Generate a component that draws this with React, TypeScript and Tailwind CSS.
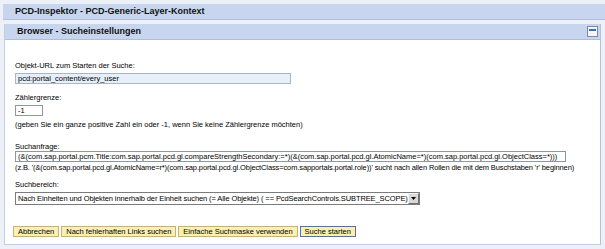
import React from "react";

const font = { fontFamily: '"Liberation Sans", Arial, sans-serif' };

function YellowButton({ text, primary }: { text: string; primary?: boolean }) {
    return (
        <button
            className={
                "h-[11px] px-[4px] leading-[9px] bg-[#fbefb2] text-black border " +
                (primary ? "border-[#5f6f8f] border-l-[#3f78c8]" : "border-[#c4b27a]")
            }
        >
            {text}
        </button>
    );
}

export default function App() {
    return (
        <main style={font} className="w-[605px] h-[249px] bg-[#eef0f8] pt-[4px] text-[7.5px] text-black overflow-hidden">
            <div className="ml-[3px] h-[16px] bg-[#c7d6ee] border-b border-[#aebfdc] flex items-center pl-[12px]">
                <h1 className="font-bold text-[9px] text-[#111]">PCD-Inspektor - PCD-Generic-Layer-Kontext</h1>
            </div>
            <div className="mt-[4px] ml-[4px] mr-[4px] h-[221px] bg-white border border-t-0 border-[#c0cfe6] border-r-[#b3c2da] flex flex-col">
                <div className="h-[16px] bg-[#c7d6ee] border-b border-[#aabedd] flex items-center justify-between pl-[12px] pr-[2px]">
                    <h2 className="font-bold text-[9px] text-[#111]">Browser - Sucheinstellungen</h2>
                    <button className="w-[11px] h-[11px] border border-[#7d8aa0] bg-[#f4f6fa] flex flex-col items-center pt-[2px]">
                        <span className="block w-[7px] h-[2px] bg-[#3a6db5]" />
                    </button>
                </div>
                <div className="flex flex-col items-start pl-[10px] pt-[21px]">
                    <p className="leading-[10px]">Objekt-URL zum Starten der Suche:</p>
                    <div className="mt-[2px] w-[276px] h-[11px] bg-[#e6f0fa] border border-[#aab4c4] leading-[9px] pl-[2px]">
                        pcd:portal_content/every_user
                    </div>

                    <p className="leading-[10px] mt-[9px]">Zählergrenze:</p>
                    <div className="mt-[2px] w-[28px] h-[11px] bg-white border border-[#8c96a6] leading-[9px] pl-[2px]">
                        -1
                    </div>
                    <p className="leading-[10px] mt-[4px]">
                        (geben Sie ein ganze positive Zahl ein oder -1, wenn Sie keine Zählergrenze möchten)
                    </p>

                    <p className="leading-[9px] mt-[12px]">Suchanfrage:</p>
                    <div className="w-[551px] h-[11px] bg-white border border-[#8c96a6] leading-[9px] pl-[2px] whitespace-nowrap overflow-hidden">
                        (&amp;(com.sap.portal.pcm.Title:com.sap.portal.pcd.gl.compareStrengthSecondary:=*)(&amp;(com.sap.portal.pcd.gl.AtomicName=*)(com.sap.portal.pcd.gl.ObjectClass=*)))
                    </div>
                    <p className="leading-[10px] mt-[1px] whitespace-nowrap tracking-[-0.12px]">
                        (z.B. '(&amp;(com.sap.portal.pcd.gl.AtomicName=r*)(com.sap.portal.pcd.gl.ObjectClass=com.sapportals.portal.role))' sucht nach allen Rollen die mit dem Buschstaben 'r' beginnen)
                    </p>

                    <p className="leading-[10px] mt-[7px]">Suchbereich:</p>
                    <div className="mt-[2px] w-[405px] h-[13px] bg-white border border-[#7b7b7b] flex items-center">
                        <span className="flex-1 min-w-0 overflow-hidden pl-[2px] whitespace-nowrap leading-[11px] tracking-[-0.1px]">
                            Nach Einheiten und Objekten innerhalb der Einheit suchen (= Alle Objekte) ( == PcdSearchControls.SUBTREE_SCOPE)
                        </span>
                        <span className="shrink-0 w-[11px] h-[11px] bg-[#d8d8d4] border border-[#f4f4f4] border-r-[#707070] border-b-[#707070] flex items-center justify-center">
                            <svg width="5" height="3" viewBox="0 0 5 3">
                                <path d="M0 0 H5 L2.5 3 Z" fill="#000" />
                            </svg>
                        </span>
                    </div>

                    <div className="mt-[21px] -ml-[2px] flex gap-[2px]">
                        <YellowButton text="Abbrechen" />
                        <YellowButton text="Nach fehlerhaften Links suchen" />
                        <YellowButton text="Einfache Suchmaske verwenden" />
                        <YellowButton text="Suche starten" primary />
                    </div>
                </div>
            </div>
        </main>
    );
}
